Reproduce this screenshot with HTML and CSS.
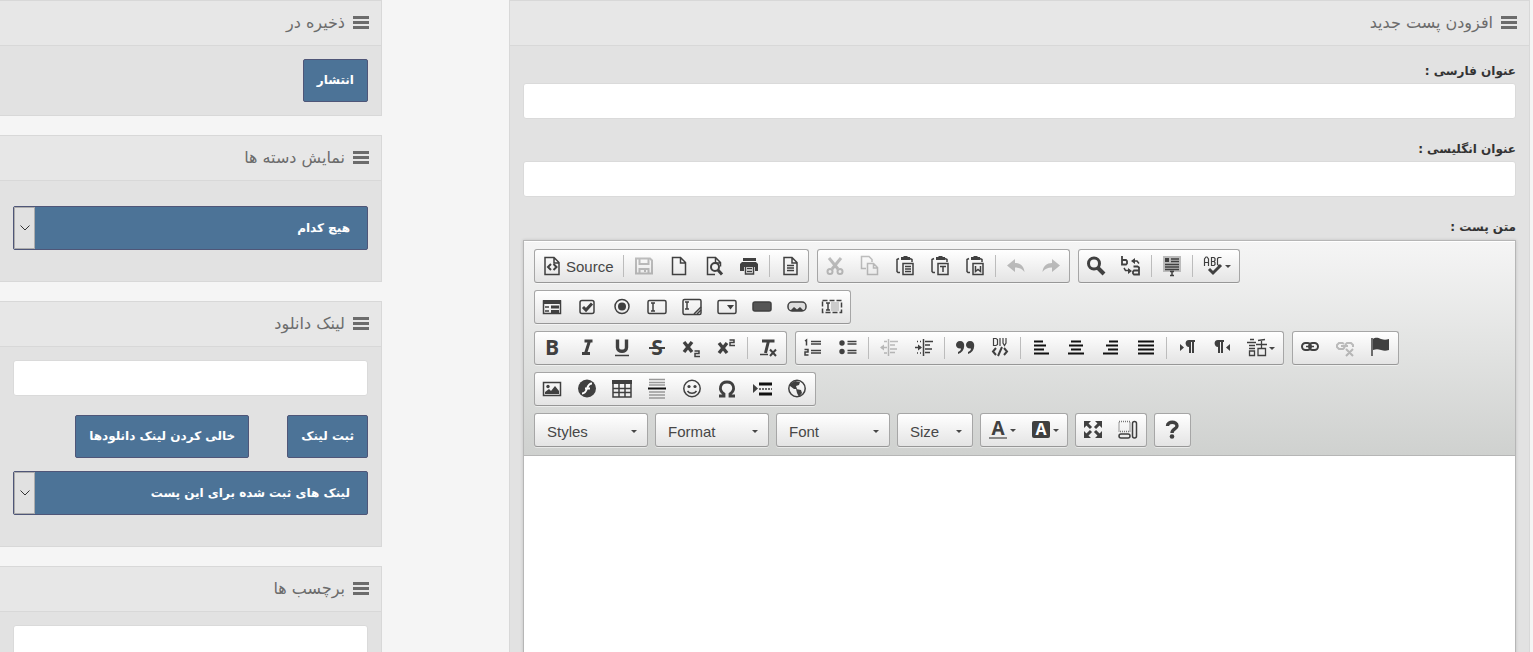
FILE: index.html
```html
<!DOCTYPE html>
<html lang="fa" dir="rtl">
<head>
<meta charset="utf-8">
<title>افزودن پست جدید</title>
<link rel="stylesheet" href="styles.css">
</head>
<body>
<div class="page">
<main class="panel">
  <h2 class="panel-head"><svg class="bars" viewBox="0 0 16 13"><path d="M0 1.5h16M0 6.5h16M0 11.5h16"/></svg>افزودن پست جدید</h2>
  <div class="panel-body">
    <div class="field">
      <label for="title-fa">عنوان فارسی :</label>
      <input class="text" id="title-fa" type="text">
    </div>
    <div class="field">
      <label for="title-en">عنوان انگلیسی :</label>
      <input class="text" id="title-en" type="text">
    </div>
    <div class="field">
      <label for="post">متن پست :</label>
      <div class="editor" dir="ltr">
        <div class="toolbar">
          <div class="row">
            <div class="group">
              <button class="tool source"><svg viewBox="0 0 20 20"><path d="M3 1.5h9l5 5v12H3zM12 2v5h5"/><path d="M9 8l-3 3 3 3M11.500 8l3 3-3 3" stroke-width="2"/></svg>Source</button>
              <i class="sep"></i>
              <button class="tool off" aria-label="Save"><svg viewBox="0 0 20 20"><path d="M2 2.500h14l2 2v13H2z" stroke-width="2"/><path d="M5.500 3v5h9V3M5.500 18v-5h9v5" stroke-width="2"/><path class="f" d="M10 13h2v3h-2z"/></svg></button>
              <button class="tool" aria-label="New Page"><svg viewBox="0 0 20 20"><path d="M3.500 1.500h8l5 5v12h-13zM11.500 2v5h5"/></svg></button>
              <button class="tool" aria-label="Preview"><svg viewBox="0 0 20 20"><path d="M11 18.500H3.500v-17h8l5 5v4M11.500 2v5h5"/><circle cx="11" cy="11" r="4" stroke-width="2"/><path d="M14 14l4 4.500" stroke-width="3"/></svg></button>
              <button class="tool" aria-label="Print"><svg viewBox="0 0 20 20"><path class="f" d="M4 2h13v3H4zM3 6h14l2 2v7h-3v-4H5v4H1V8z"/><path d="M6.500 10v8h8v-8M8 12.500h5M8 15.500h5"/></svg></button>
              <i class="sep"></i>
              <button class="tool" aria-label="Templates"><svg viewBox="0 0 20 20"><path d="M4 1.500h8l5 5v12H4zM12 2v5h5"/><path d="M7 9.500h7M7 12h7M7 14.500h7"/></svg></button>
            </div>
            <div class="group">
              <button class="tool off" aria-label="Cut"><svg viewBox="0 0 20 20"><path d="M4 2l9 11M16 2L7 13" stroke-width="3"/><circle cx="5" cy="15.500" r="2.500" stroke-width="2"/><circle cx="15" cy="15.500" r="2.500" stroke-width="2"/></svg></button>
              <button class="tool off" aria-label="Copy"><svg viewBox="0 0 20 20"><path d="M6 12.500H1.500v-12H9l3 3V6"/><path d="M7.500 7.500h6l4 4v7h-10zM13.500 8v4h4"/></svg></button>
              <button class="tool" aria-label="Paste"><svg viewBox="0 0 20 20"><path d="M5 16.500H3l-1-1v-12l2-1M15 2.500l2 1V6"/><path class="f" d="M6 1h2l1-1h3l1 1h2v3H6z"/><path d="M8 7.500h10v11H8z"/><path d="M10 10.500h6M10 13h6M10 15.500h6"/></svg></button>
              <button class="tool" aria-label="Paste as plain text"><svg viewBox="0 0 20 20"><path d="M5 16.500H3l-1-1v-12l2-1M15 2.500l2 1V6"/><path class="f" d="M6 1h2l1-1h3l1 1h2v3H6z"/><path d="M8 7.500h10v11H8z"/><path d="M10 10.500h6M13 10v6"/></svg></button>
              <button class="tool" aria-label="Paste from Word"><svg viewBox="0 0 20 20"><path d="M5 16.500H3l-1-1v-12l2-1M15 2.500l2 1V6"/><path class="f" d="M6 1h2l1-1h3l1 1h2v3H6z"/><path d="M8 7.500h10v11H8z"/><path d="M10.500 10v5.500l2.500-2 2.500 2V10"/></svg></button>
              <i class="sep"></i>
              <button class="tool off" aria-label="Undo"><svg viewBox="0 0 20 20"><path class="f" d="M1 9.500L9 3v4c5 0 9 3 9.500 9-2-3-5-4.500-9.500-4.500V16z"/></svg></button>
              <button class="tool off" aria-label="Redo"><svg viewBox="0 0 20 20"><path class="f" d="M19 9.500L11 3v4c-5 0-9 3-9.500 9 2-3 5-4.500 9.500-4.500V16z"/></svg></button>
            </div>
            <div class="group">
              <button class="tool" aria-label="Find"><svg viewBox="0 0 20 20"><circle cx="8" cy="7.500" r="5.500" stroke-width="3"/><path d="M12 12l6 6" stroke-width="4"/></svg></button>
              <button class="tool" aria-label="Replace"><svg viewBox="0 0 20 20"><path d="M1 0v8.500h4l1-1V5L5 4H1M12.500 10.500h4l1.500 1v7h-5l-1-1v-2l1-1h5" stroke-width="1.800"/><path d="M13 5h3l2 2.500M3 12l1.500 2.500H9"/><path class="f" d="M14 2v6l-4-3zM7 12l4 3-4 3z"/></svg></button>
              <i class="sep"></i>
              <button class="tool" aria-label="Select All"><svg viewBox="0 0 20 20"><path fill="#bbb" stroke="none" d="M1 0h18v16H1z"/><path class="f" d="M3 2h4v4H3z"/><path d="M9 3h8M9 5.500h8M3 8.500h14M3 11h14M3 13.500h14M8 15.500h4M8 19.500h4M10 15v5" stroke-width="1.500"/></svg></button>
              <i class="sep"></i>
              <button class="tool wide" aria-label="Spell Check As You Type"><svg viewBox="0 0 20 20"><path d="M1.500 10V3l1.500-2h1l1.500 2v7M1.500 6.500h4M8.500 1.500v8h2.500l1-1V6.500l-1-1H8.500 11l1-1v-2l-1-1zM18.500 1.500h-3l-1 1v6l1 1H17" stroke-width="1.200"/><path d="M6 13l4 4 8-8" stroke-width="3"/></svg><i class="caret"></i></button>
            </div>
          </div>
          <div class="row">
            <div class="group">
              <button class="tool" aria-label="Form"><svg viewBox="0 0 20 20"><path d="M1.500 4v12.500h17V4z"/><path class="f" d="M1 3h18v4H1zM9 8.500h8v3H9zM9 13h8v3H9z"/><path d="M3 10h4M3 14h4"/></svg></button>
              <button class="tool" aria-label="Checkbox"><svg viewBox="0 0 20 20"><rect x="3" y="3.500" width="14" height="13" rx="2"/><path d="M6 10l3 3 6-6.500" stroke-width="3"/></svg></button>
              <button class="tool" aria-label="Radio Button"><svg viewBox="0 0 20 20"><circle cx="10" cy="9.500" r="7"/><circle class="f" cx="10" cy="9.500" r="4"/></svg></button>
              <button class="tool" aria-label="Text Field"><svg viewBox="0 0 20 20"><rect x="1" y="3.500" width="18" height="13" rx="1.500"/><path d="M4 6h4M4 14h4M6 6v8"/></svg></button>
              <button class="tool" aria-label="Textarea"><svg viewBox="0 0 20 20"><rect x="1" y="2.500" width="18" height="15" rx="1.500"/><path d="M3 5h4M3 12h4M5 5v7M12 17l7-7M15 17l4-4"/></svg></button>
              <button class="tool" aria-label="Selection Field"><svg viewBox="0 0 20 20"><rect x="1" y="3.500" width="18" height="13" rx="1.500"/><path class="f" d="M10 8h7l-3.500 4.500z"/></svg></button>
              <button class="tool" aria-label="Button"><svg viewBox="0 0 20 20"><rect x="1" y="5" width="18" height="9" rx="2" fill="#555"/></svg></button>
              <button class="tool" aria-label="Image Button"><svg viewBox="0 0 20 20"><rect x="1" y="5" width="18" height="9" rx="4" fill="#ddd"/><path class="f" d="M3 14l4-4 3 2.500 3-2.500 4 4z"/></svg></button>
              <button class="tool" aria-label="Hidden Field"><svg viewBox="0 0 20 20"><path fill="#ccc" stroke="none" d="M9 5h8v9H9z"/><path d="M.500 3.500h19v12H.500z" stroke-dasharray="5 2"/><path d="M4 6h4M4 13h4M6 6v7"/></svg></button>
            </div>
          </div>
          <div class="row">
            <div class="group">
              <button class="tool" aria-label="Bold"><svg viewBox="0 0 20 20"><text x="10" y="17" font-size="21">B</text></svg></button>
              <button class="tool" aria-label="Italic"><svg viewBox="0 0 20 20"><path d="M7.500 3h8M5 15.500h8M12.500 3L8.500 15.500" stroke-width="3"/></svg></button>
              <button class="tool" aria-label="Underline"><svg viewBox="0 0 20 20"><path d="M5.500 1.500v8c0 5 9 5 9 0v-8" stroke-width="3.400"/><path d="M3 17.500h14"/></svg></button>
              <button class="tool" aria-label="Strikethrough"><svg viewBox="0 0 20 20"><text x="10" y="17" font-size="21">S</text><path d="M2 10h16" stroke-width="2"/></svg></button>
              <button class="tool" aria-label="Subscript"><svg viewBox="0 0 20 20"><path d="M2 4l8 10M10 4l-8 10" stroke-width="3.400"/><path d="M12.500 13h4.500v2.500h-4v3h5"/></svg></button>
              <button class="tool" aria-label="Superscript"><svg viewBox="0 0 20 20"><path d="M2 5l8 10M10 5l-8 10" stroke-width="3.400"/><path d="M12.500 2H17v2.500h-4v3h5"/></svg></button>
              <i class="sep"></i>
              <button class="tool" aria-label="Remove Format"><svg viewBox="0 0 20 20"><path d="M4 3h12.500M10.500 3L7.500 15" stroke-width="3"/><path d="M2 16.500h8"/><path d="M12 11.500l6 6.500M18 11.500l-6 6.500" stroke-width="2"/></svg></button>
            </div>
            <div class="group">
              <button class="tool" aria-label="Numbered List"><svg viewBox="0 0 20 20"><path d="M2 3l1.500-1v5.500M1.500 11.500H5v2.500H2v3h3.500"/><path d="M8 3.500h10M8 6h10M8 12.500h10M8 15h10"/></svg></button>
              <button class="tool" aria-label="Bulleted List"><svg viewBox="0 0 20 20"><circle class="f" cx="4" cy="5" r="2.700"/><circle class="f" cx="4" cy="13.500" r="2.700"/><path d="M9.500 3.500h9M9.500 6h9M9.500 12.500h9M9.500 15h9"/></svg></button>
              <i class="sep"></i>
              <button class="tool off" aria-label="Decrease Indent"><svg viewBox="0 0 20 20"><path d="M9.500 1v17M11 3.500h8M11 7h5M11 11h7M11 14.500h5M2 9.500h6M5 3.500h3M5 15h3"/><path class="f" d="M1 9.500l4-3v6z"/></svg></button>
              <button class="tool" aria-label="Increase Indent"><svg viewBox="0 0 20 20"><path d="M9.500 1v17M11 3.500h8M11 7h5M11 11h7M11 14.500h5M1 9.500h6M3 3.500h1M6 3.500h1M3 15h1M6 15h1"/><path class="f" d="M8 9.500l-4-3v6z"/></svg></button>
              <i class="sep"></i>
              <button class="tool" aria-label="Block Quote"><svg viewBox="0 0 20 20"><path class="f" d="M5 3c3 0 4.500 2 4.200 5C9 12 7 14.500 3 16v-2c2-1 3-2 3-3.500C3 11 1 9 1 7s1.500-4 4-4zM15 3c3 0 4.500 2 4.200 5-.200 4-2.200 6.500-6.200 8v-2c2-1 3-2 3-3.500-3 .500-5-1.500-5-3.500s1.500-4 4-4z"/></svg></button>
              <button class="tool" aria-label="Create Div Container"><svg viewBox="0 0 20 20"><path d="M3.500.500v7H6l1.500-1v-5L6 .500zM10 0v8M13 0v5l1.500 2.500L16 5V0" stroke-width="1.200"/><path d="M6 10l-3 3.500L6 17M14 10l3 3.500-3 3.500M12 9l-4 9" stroke-width="2"/></svg></button>
              <i class="sep"></i>
              <button class="tool" aria-label="Align Left"><svg class="lines" viewBox="0 0 20 20"><path d="M3 3.500h9M3 7.500h12M3 11.500h10M3 15.500h15"/></svg></button>
              <button class="tool" aria-label="Center"><svg class="lines" viewBox="0 0 20 20"><path d="M5 3.500h10M3 7.500h14M5 11.500h10M2 15.500h16"/></svg></button>
              <button class="tool" aria-label="Align Right"><svg class="lines" viewBox="0 0 20 20"><path d="M8 3.500h9M5 7.500h12M7 11.500h10M2 15.500h15"/></svg></button>
              <button class="tool" aria-label="Justify"><svg class="lines" viewBox="0 0 20 20"><path d="M2 3.500h16M2 7.500h16M2 11.500h16M2 15.500h16"/></svg></button>
              <i class="sep"></i>
              <button class="tool" aria-label="Text direction from left to right"><svg viewBox="0 0 20 20"><path class="f" d="M3 6v7l4-3.500zM18 2v2h-1v11h-2V4h-1v11h-2V9C8 9 7 2 12 2z"/></svg></button>
              <button class="tool" aria-label="Text direction from right to left"><svg viewBox="0 0 20 20"><path class="f" d="M18 6v7l-4-3.500zM12 2v2h-1v11H9V4H8v11H6V9C2 9 1 2 6 2z"/></svg></button>
              <button class="tool wide" aria-label="Set language"><svg viewBox="0 0 20 20"><path d="M3 1.500h4M0 4.500h9M2 7.500h6M2 10.500h6M2.500 13h5v4.500h-5zM18 1.500l-7 1M9 6.500h11M14.500 2v8M11 10.500h7.500v7H11z" stroke-width="1.300"/></svg><i class="caret"></i></button>
            </div>
            <div class="group">
              <button class="tool" aria-label="Link"><svg viewBox="0 0 20 20"><rect x="2" y="5" width="9" height="7" rx="3.500" stroke-width="2"/><rect x="9" y="5" width="9" height="7" rx="3.500" stroke-width="2"/><path d="M6 8.500h8"/></svg></button>
              <button class="tool off" aria-label="Unlink"><svg viewBox="0 0 20 20"><path d="M9 6L7.500 5H4L2 7v2l2 2h4l2-2M18 9V7l-2-2h-4l-2 2M6 8h7M11 11l7 7M18 11l-7 7" stroke-width="2"/></svg></button>
              <button class="tool" aria-label="Anchor"><svg viewBox="0 0 20 20"><path d="M2 0v18"/><path class="f" d="M3 1c3-2 5-1 8 0s5 1 8 0v11c-3 1-5 1-8 0s-5-1-8 0z"/></svg></button>
            </div>
          </div>
          <div class="row">
            <div class="group">
              <button class="tool" aria-label="Image"><svg viewBox="0 0 20 20"><path d="M1.500 3.500h17v13h-17z"/><circle class="f" cx="6" cy="7.500" r="1.700"/><path class="f" d="M3 15v-2l4-3 2 2 4-5 4 5v3z"/></svg></button>
              <button class="tool" aria-label="Flash"><svg viewBox="0 0 20 20"><circle class="f" cx="10" cy="9.500" r="9"/><path stroke="#fff" stroke-width="2" d="M15 4.500c-3 0-4 2-5 5s-2 5-5 5M8 9.500h5"/></svg></button>
              <button class="tool" aria-label="Table"><svg viewBox="0 0 20 20"><path class="f" d="M0 1h20v4H0z"/><path d="M1 5v13h18V5M1 9.500h18M1 13.500h18M7 5v13M13 5v13"/></svg></button>
              <button class="tool" aria-label="Horizontal Line"><svg viewBox="0 0 20 20"><path stroke="#999" d="M2 .500h16M2 3.500h16M2 6h16M2 13h16M2 16h16M2 19h16"/><path stroke="#111" stroke-width="2" d="M1 9.500h18"/></svg></button>
              <button class="tool" aria-label="Smiley"><svg viewBox="0 0 20 20"><circle cx="10" cy="9.500" r="8.200"/><circle class="f" cx="7" cy="7.500" r="1.600"/><circle class="f" cx="13" cy="7.500" r="1.600"/><path d="M5.500 12c2 3 7 3 9 0"/></svg></button>
              <button class="tool" aria-label="Special Character"><svg viewBox="0 0 20 20"><path d="M2 17h5v-2C1 11 3 3 10 3s9 8 3 12v2h5" stroke-width="2.800"/></svg></button>
              <button class="tool" aria-label="Page Break"><svg viewBox="0 0 20 20"><path class="f" d="M1 5v9l5-4.500z"/><path stroke="#111" stroke-width="3" d="M7 5h13M7 15h13"/><path d="M7 10h13" stroke-dasharray="2 1"/></svg></button>
              <button class="tool" aria-label="IFrame"><svg viewBox="0 0 20 20"><circle cx="10" cy="9.500" r="8.200"/><path class="f" d="M3 5l5-3 5 1-1 3-3 1 1 3-3 0-4-3zM9 10l5 1 1 3-3 4-2-4z"/></svg></button>
            </div>
          </div>
          <div class="row combos">
            <button class="combo">Styles<i class="caret"></i></button>
            <button class="combo">Format<i class="caret"></i></button>
            <button class="combo">Font<i class="caret"></i></button>
            <button class="combo small">Size<i class="caret"></i></button>
            <div class="group">
              <button class="tool wide" aria-label="Text Color"><svg viewBox="0 0 20 20"><text x="10" y="15" font-size="19">A</text><path stroke="#888" stroke-width="2" d="M1 18h18"/></svg><i class="caret"></i></button>
              <button class="tool wide" aria-label="Background Color"><svg viewBox="0 0 20 20"><rect class="f" x="1" y="1" width="18" height="17" rx="2"/><text class="light" x="10" y="15" font-size="16">A</text></svg><i class="caret"></i></button>
            </div>
            <div class="group">
              <button class="tool" aria-label="Maximize"><svg viewBox="0 0 20 20"><path class="f" d="M1 1h7L1 8zM19 1h-7l7 7zM1 18h7l-7-7zM19 18h-7l7-7z"/><path stroke-width="3" d="M3 3l5 5M17 3l-5 5M3 16l5-5M17 16l-5-5"/></svg></button>
              <button class="tool" aria-label="Show Blocks"><svg viewBox="0 0 20 20"><path stroke="#777" stroke-dasharray="1 1" d="M1 1.500h11v10H1z"/><rect x="1" y="14" width="11" height="4" rx="2"/><rect x="14.500" y="1.500" width="4" height="16.500" rx="2"/></svg></button>
            </div>
            <div class="group">
              <button class="tool" aria-label="About CKEditor"><svg viewBox="0 0 20 20"><path d="M5.500 6c0-5 9.500-5 9.500 0 0 3-5 3-5 7" stroke-width="3.400"/><circle class="f" cx="10" cy="16.500" r="2.300"/></svg></button>
            </div>
          </div>
        </div>
        <textarea class="content" id="post" dir="rtl"></textarea>
      </div>
    </div>
  </div>
</main>
<aside class="side">
  <section class="panel">
    <h2 class="panel-head"><svg class="bars" viewBox="0 0 16 13"><path d="M0 1.500h16M0 6.500h16M0 11.500h16"/></svg>ذخیره در</h2>
    <div class="panel-body"><button class="btn">انتشار</button></div>
  </section>
  <section class="panel">
    <h2 class="panel-head"><svg class="bars" viewBox="0 0 16 13"><path d="M0 1.500h16M0 6.500h16M0 11.500h16"/></svg>نمایش دسته ها</h2>
    <div class="panel-body roomy">
      <div class="select"><select aria-label="نمایش دسته ها"><option>هیچ کدام</option></select><span class="drop"><svg viewBox="0 0 10 6"><path d="M.500.500L5 5 9.500.500"/></svg></span></div>
    </div>
  </section>
  <section class="panel">
    <h2 class="panel-head"><svg class="bars" viewBox="0 0 16 13"><path d="M0 1.500h16M0 6.500h16M0 11.500h16"/></svg>لینک دانلود</h2>
    <div class="panel-body links">
      <input class="text" type="text" aria-label="لینک دانلود">
      <div class="actions"><button class="btn">ثبت لینک</button><button class="btn">خالی کردن لینک دانلودها</button></div>
      <div class="select"><select aria-label="لینک های ثبت شده"><option>لینک های ثبت شده برای این پست</option></select><span class="drop"><svg viewBox="0 0 10 6"><path d="M.500.500L5 5 9.500.500"/></svg></span></div>
    </div>
  </section>
  <section class="panel">
    <h2 class="panel-head"><svg class="bars" viewBox="0 0 16 13"><path d="M0 1.500h16M0 6.500h16M0 11.500h16"/></svg>برچسب ها</h2>
    <div class="panel-body"><input class="text" type="text" aria-label="برچسب ها"></div>
  </section>
</aside>
</div>
</body>
</html>
```
FILE: styles.css
```css
* { box-sizing: border-box; }
html { scrollbar-width: none; }
body {
  margin: 0;
  background: #f5f5f5;
  color: #333;
  font-family: "DejaVu Sans", sans-serif;
  font-size: 13px;
}
button, input, select, textarea { font: inherit; margin: 0; }
.page {
  display: grid;
  grid-template-columns: 1021fr 382fr;
  column-gap: 127px;
  align-items: start;
  padding-right: 3px;
}
.panel { background: #e2e2e2; border: 1px solid #d8d8d8; }
.side { display: grid; gap: 19px; }
.side .panel { border-left: 0; }
.panel-head {
  display: flex;
  align-items: center;
  gap: 8px;
  height: 45px;
  margin: 0;
  padding: 0 12px 2px;
  background: #e7e7e7;
  border-bottom: 1px solid #d8d8d8;
  color: #6c6c6c;
  font-size: 16px;
  font-weight: normal;
}
.bars { width: 16px; height: 13px; stroke: #6c6c6c; stroke-width: 3; }
.panel-body { padding: 13px; }
.panel-body.roomy { padding: 25px 13px 31px; }
.panel-body.links { padding-bottom: 31px; }
.field { margin-bottom: 18px; }
.field label {
  display: block;
  height: 24px;
  line-height: 24px;
  font-size: 12px;
  font-weight: bold;
}
.text {
  display: block;
  width: 100%;
  height: 36px;
  padding: 6px 12px;
  background: #fff;
  border: 1px solid #dadada;
  border-radius: 3px;
}
.btn {
  height: 43px;
  padding: 0 13px 2px;
  background: #4c7397;
  border: 1px solid #4f5678;
  border-radius: 2px;
  color: #fff;
  font-size: 12px;
  font-weight: bold;
}
.actions { display: flex; gap: 38px; margin: 19px 0 13px; }
.select { position: relative; }
.select select {
  appearance: none;
  display: block;
  width: 100%;
  height: 44px;
  padding: 0 17px;
  background: #4c7397;
  border: 1px solid #4f5678;
  border-radius: 2px;
  color: #fff;
  font-size: 12px;
  font-weight: bold;
}
.drop {
  position: absolute;
  left: 1px;
  top: 1px;
  bottom: 1px;
  width: 21px;
  display: grid;
  place-items: center;
  background: #e1e1e1;
  border: 1px solid #adadad;
  pointer-events: none;
}
.drop svg { width: 10px; height: 6px; fill: none; stroke: #333; }

.editor {
  margin-top: 1px;
  border: 1px solid #b6b6b6;
  box-shadow: 0 0 3px rgba(0, 0, 0, .15);
}
.toolbar {
  display: grid;
  gap: 7px;
  padding: 8px 10px;
  background: linear-gradient(#f5f5f5, #cfd1cf);
  border-bottom: 1px solid #b6b6b6;
  box-shadow: inset 0 1px 0 #fff;
  font-family: "Liberation Sans", Arial, sans-serif;
  font-size: 15px;
  color: #474747;
}
.row { display: flex; gap: 8px; }
.row.combos { gap: 7px; }
.group, .combo {
  display: flex;
  align-items: center;
  height: 34px;
  background: linear-gradient(#fff, #e4e4e4);
  border: 1px solid #a6a6a6;
  border-bottom-color: #979797;
  border-radius: 3px;
  box-shadow: 0 1px 0 rgba(255, 255, 255, .5);
}
.tool {
  display: flex;
  align-items: center;
  width: 35px;
  height: 32px;
  padding: 0 0 0 7px;
  border: 0;
  background: none;
  color: #474747;
}
.tool.source { width: 86px; gap: 4px; }
.tool.wide { width: 43px; gap: 2px; }
.tool svg {
  flex: none;
  width: 20px;
  height: 20px;
  overflow: visible;
  fill: none;
  stroke: #404040;
  stroke-width: 1.5;
}
.tool svg .f { fill: #404040; stroke: none; }
.tool svg text {
  fill: #404040;
  stroke: none;
  font-family: "Open Sans", sans-serif;
  font-weight: bold;
  text-anchor: middle;
}
.tool svg .light { fill: #fff; }
.tool svg.lines { stroke: #111; stroke-width: 2.2; }
.tool.off svg { opacity: .32; }
.sep { width: 1px; height: 22px; margin: 0 3px 0 2px; background: #bcbcbc; }
.caret {
  border: 3px solid transparent;
  border-top-color: #474747;
  border-bottom: 0;
}
.combo {
  justify-content: space-between;
  width: 114px;
  padding: 2px 10px 0 12px;
  color: #474747;
}
.combo.small { width: 76px; }
.content {
  display: block;
  width: 100%;
  height: 320px;
  padding: 20px;
  border: 0;
  background: #fff;
  resize: none;
}
```
